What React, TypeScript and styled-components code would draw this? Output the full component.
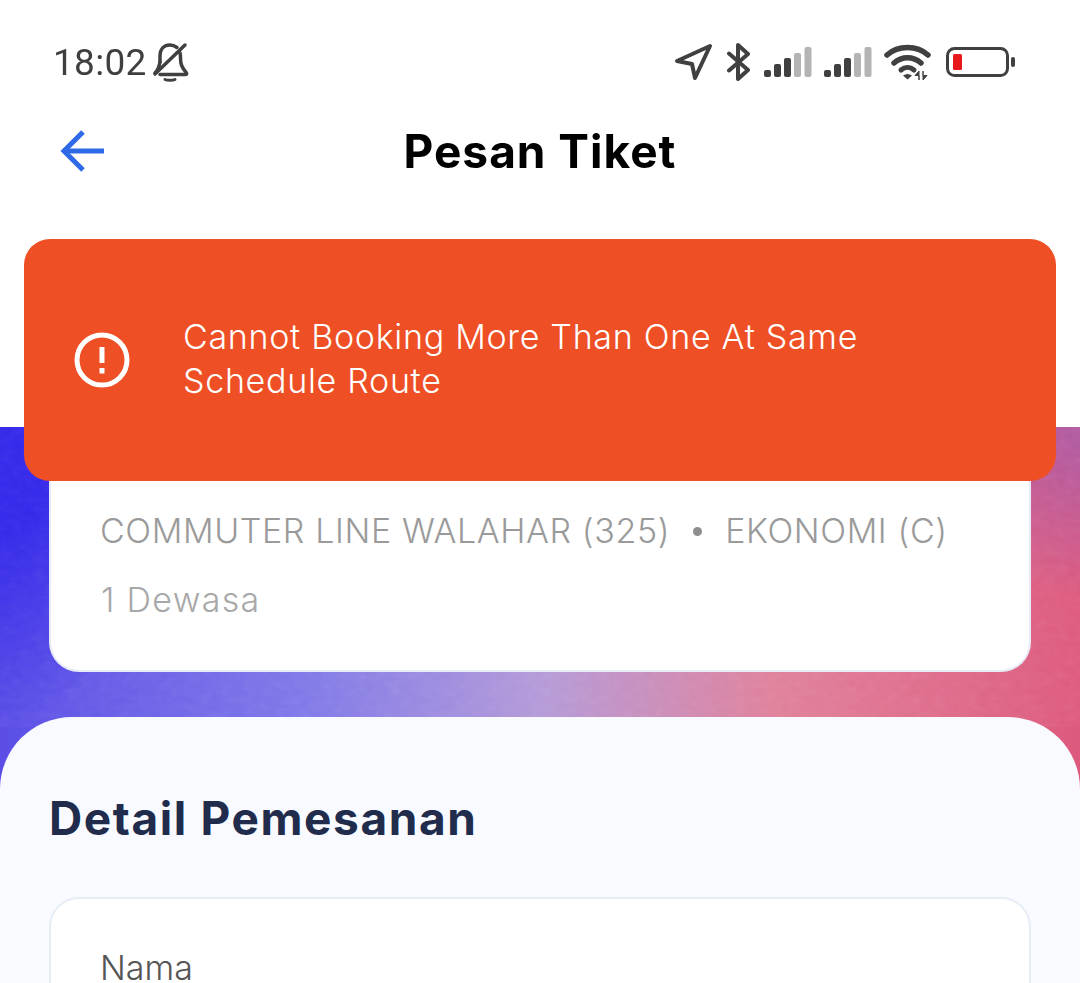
import styled, { createGlobalStyle } from "styled-components";

const GlobalStyle = createGlobalStyle`
  html, body {
    margin: 0;
    padding: 0;
    background: #ffffff;
  }
  * {
    box-sizing: border-box;
  }
`;

const Page = styled.div`
  position: relative;
  width: 1080px;
  height: 983px;
  overflow: hidden;
  display: flex;
  flex-direction: column;
  background: #ffffff;
  font-family: Inter, "Noto Sans", sans-serif;
`;

const TopArea = styled.div`
  height: 427px;
  flex: none;
  display: flex;
  flex-direction: column;
`;

const StatusBar = styled.div`
  height: 84px;
  margin-top: 20px;
  padding: 0 64px 0 53px;
  display: flex;
  align-items: center;
  justify-content: space-between;
`;

const StatusGroup = styled.div`
  display: flex;
  align-items: center;
  gap: ${({ $gap }: { $gap: number }) => $gap}px;
`;

const Clock = styled.span`
  font-family: Roboto, sans-serif;
  font-size: 37px;
  letter-spacing: 0.3px;
  color: #3f3f3f;
`;

const Header = styled.header`
  height: 94px;
  padding-left: 58px;
  position: relative;
  display: flex;
  align-items: center;
`;

const BackButton = styled.button`
  padding: 0;
  border: 0;
  background: none;
  display: flex;
`;

const Title = styled.h1`
  position: absolute;
  left: 0;
  right: 0;
  margin: 0;
  text-align: center;
  font-size: 46px;
  font-weight: 700;
  letter-spacing: 1px;
  color: #000000;
`;

const Toast = styled.div`
  position: absolute;
  z-index: 2;
  top: 239px;
  left: 24px;
  width: 1032px;
  height: 242px;
  padding: 0 50px;
  border-radius: 26px;
  background: #ee4f25;
  display: flex;
  align-items: center;
  gap: 53px;
  color: #ffffff;
`;

const ToastText = styled.p`
  margin: 0 0 3px;
  width: 720px;
  font-size: 34px;
  line-height: 44px;
  font-weight: 300;
  letter-spacing: 0.7px;
`;

const Hero = styled.section`
  position: relative;
  flex: 1;
  display: flex;
  flex-direction: column;
  background:
    radial-gradient(ellipse 170px 300px at 0 0, #3529ea 35%, rgba(53, 41, 234, 0) 100%),
    radial-gradient(ellipse 150px 170px at 100% 0, #b25aa0 10%, rgba(178, 90, 160, 0) 100%),
    linear-gradient(90deg, #5a4ee6 0%, #7f78e8 28%, #b49ad8 50%, #e0809a 72%, #dd5a7e 100%);
`;

const Grain = styled.svg`
  position: absolute;
  top: 0;
  left: 0;
  width: 100%;
  height: 300px;
  opacity: 0.3;
  mix-blend-mode: soft-light;
`;

const TicketCard = styled.div`
  position: relative;
  height: 217px;
  margin: 28px 49px 0;
  padding: 0 50px 50px;
  display: flex;
  flex-direction: column;
  justify-content: flex-end;
  gap: 29px;
  background: #ffffff;
  border: 2px solid #e7ebf6;
  border-top: 0;
  border-radius: 0 0 30px 30px;
`;

const TrainInfo = styled.div`
  display: flex;
  align-items: center;
  gap: 23px;
  margin-left: -1px;
  font-size: 34px;
  line-height: 40px;
  font-weight: 300;
  letter-spacing: 0.6px;
  color: #9a9a9a;
`;

const Dot = styled.span`
  width: 9px;
  height: 9px;
  border-radius: 50%;
  background: #8f8f8f;
`;

const Passenger = styled.div`
  font-size: 34px;
  line-height: 40px;
  font-weight: 300;
  letter-spacing: 1.3px;
  color: #a8a8a8;
`;

const Sheet = styled.div`
  position: relative;
  flex: 1;
  margin-top: 45px;
  padding: 76px 49px 0;
  background: #f8faff;
  border-radius: 72px 72px 0 0;
`;

const SectionTitle = styled.h2`
  margin: 0;
  font-size: 46px;
  line-height: 50px;
  font-weight: 700;
  letter-spacing: 1.6px;
  color: #212c4d;
`;

const FormCard = styled.div`
  height: 200px;
  margin-top: 54px;
  padding: 49px 49px 0;
  background: #ffffff;
  border: 2px solid #e6edf7;
  border-radius: 30px;
`;

const FieldLabel = styled.div`
  font-size: 34px;
  line-height: 40px;
  font-weight: 300;
  color: #555555;
`;

const BellOffIcon = () => (
  <svg width="38" height="40" viewBox="0 0 38 40" fill="none" stroke="#404040" strokeWidth="3.500" strokeLinecap="round" strokeLinejoin="round">
    <path d="M9 20v-6C9 7 13 3 19 3c3 0 5 1 7 2.500" />
    <path d="M29 11c.5 2 .5 3 .5 5 0 6 1 9 6 15 .5 1 0 1.500-1 1.500H9" />
    <path d="M9 20c-1 5-2 8-5 11" />
    <path d="M14 37.500c2 1 8 1 10 0" strokeWidth="3" />
    <path d="M4 32 34 3" />
  </svg>
);

const LocationIcon = () => (
  <svg width="40" height="38" viewBox="0 0 40 38" fill="none" stroke="#404040" strokeWidth="4" strokeLinejoin="round">
    <path d="M36 3 3 18l15 3 3 14z" />
  </svg>
);

const BluetoothIcon = () => (
  <svg width="26" height="38" viewBox="0 0 26 38" fill="none" stroke="#404040" strokeWidth="4" strokeLinecap="round" strokeLinejoin="round">
    <path d="M3 10.500 22 27 12 36V2l10 9L3 27.500" />
  </svg>
);

const SignalIcon = () => (
  <svg width="48" height="32" viewBox="0 0 48 32" fill="none">
    <rect x="0" y="24" width="7" height="7" rx="2" fill="#404040" />
    <rect x="10" y="18" width="7" height="13" rx="2" fill="#404040" />
    <rect x="20" y="12" width="7" height="19" rx="2" fill="#404040" />
    <rect x="30" y="7" width="7" height="24" rx="2" fill="#b4b4b4" />
    <rect x="40.500" y="1" width="7" height="30" rx="2" fill="#b4b4b4" />
  </svg>
);

const WifiIcon = () => (
  <svg width="50" height="38" viewBox="0 0 50 38" fill="none">
    <path d="M3 12C14 2 33 2 44 12" stroke="#404040" strokeWidth="5.500" strokeLinecap="round" />
    <path d="M10 20c8-7 19-7 27 0" stroke="#404040" strokeWidth="5.500" strokeLinecap="round" />
    <path d="M17 27c4-3.500 9-3.500 13 0" stroke="#404040" strokeWidth="5" strokeLinecap="round" />
    <path d="M19 32.500c3-2 6-2 9 0l-4.500 4z" fill="#404040" />
    <path d="M35 37v-9l-4 4.500h4zM39 28v9l4-4.500h-4z" fill="#404040" stroke="#404040" strokeWidth="1" />
  </svg>
);

const BatteryIcon = () => (
  <svg width="70" height="30" viewBox="0 0 70 30" fill="none">
    <rect x="1.500" y="1.500" width="60" height="27" rx="7" stroke="#404040" strokeWidth="3" />
    <rect x="7" y="7" width="9" height="16" rx="1.500" fill="#e8191c" />
    <rect x="65" y="10" width="4" height="10" rx="2" fill="#404040" />
  </svg>
);

const BackArrowIcon = () => (
  <svg width="46" height="44" viewBox="0 0 46 44" fill="none" stroke="#2f6ae6" strokeWidth="5">
    <path d="M46 22H7" />
    <path d="M25 3 6 22l19 19" />
  </svg>
);

const AlertIcon = () => (
  <svg width="56" height="56" viewBox="0 0 56 56" fill="none" stroke="#ffffff" strokeWidth="5">
    <circle cx="28" cy="28" r="25" />
    <path d="M28 15v16" />
    <path d="M28 36v5.500" />
  </svg>
);

const GrainTexture = () => (
  <Grain aria-hidden="true">
    <filter id="grain">
      <feTurbulence type="fractalNoise" baseFrequency="0.09 0.13" numOctaves="3" seed="4" />
      <feColorMatrix type="saturate" values="0" />
    </filter>
    <rect width="100%" height="100%" filter="url(#grain)" />
  </Grain>
);

const App = () => (
  <Page>
    <GlobalStyle />
    <TopArea>
      <StatusBar>
        <StatusGroup $gap={4}>
          <Clock>18:02</Clock>
          <BellOffIcon />
        </StatusGroup>
        <StatusGroup $gap={12}>
          <LocationIcon />
          <BluetoothIcon />
          <SignalIcon />
          <SignalIcon />
          <WifiIcon />
          <BatteryIcon />
        </StatusGroup>
      </StatusBar>
      <Header>
        <BackButton>
          <BackArrowIcon />
        </BackButton>
        <Title>Pesan Tiket</Title>
      </Header>
    </TopArea>
    <Hero>
      <GrainTexture />
      <TicketCard>
        <TrainInfo>
          <span>COMMUTER LINE WALAHAR (325)</span>
          <Dot />
          <span>EKONOMI (C)</span>
        </TrainInfo>
        <Passenger>1 Dewasa</Passenger>
      </TicketCard>
      <Sheet>
        <SectionTitle>Detail Pemesanan</SectionTitle>
        <FormCard>
          <FieldLabel>Nama</FieldLabel>
        </FormCard>
      </Sheet>
    </Hero>
    <Toast>
      <AlertIcon />
      <ToastText>Cannot Booking More Than One At Same Schedule Route</ToastText>
    </Toast>
  </Page>
);

export default App;
